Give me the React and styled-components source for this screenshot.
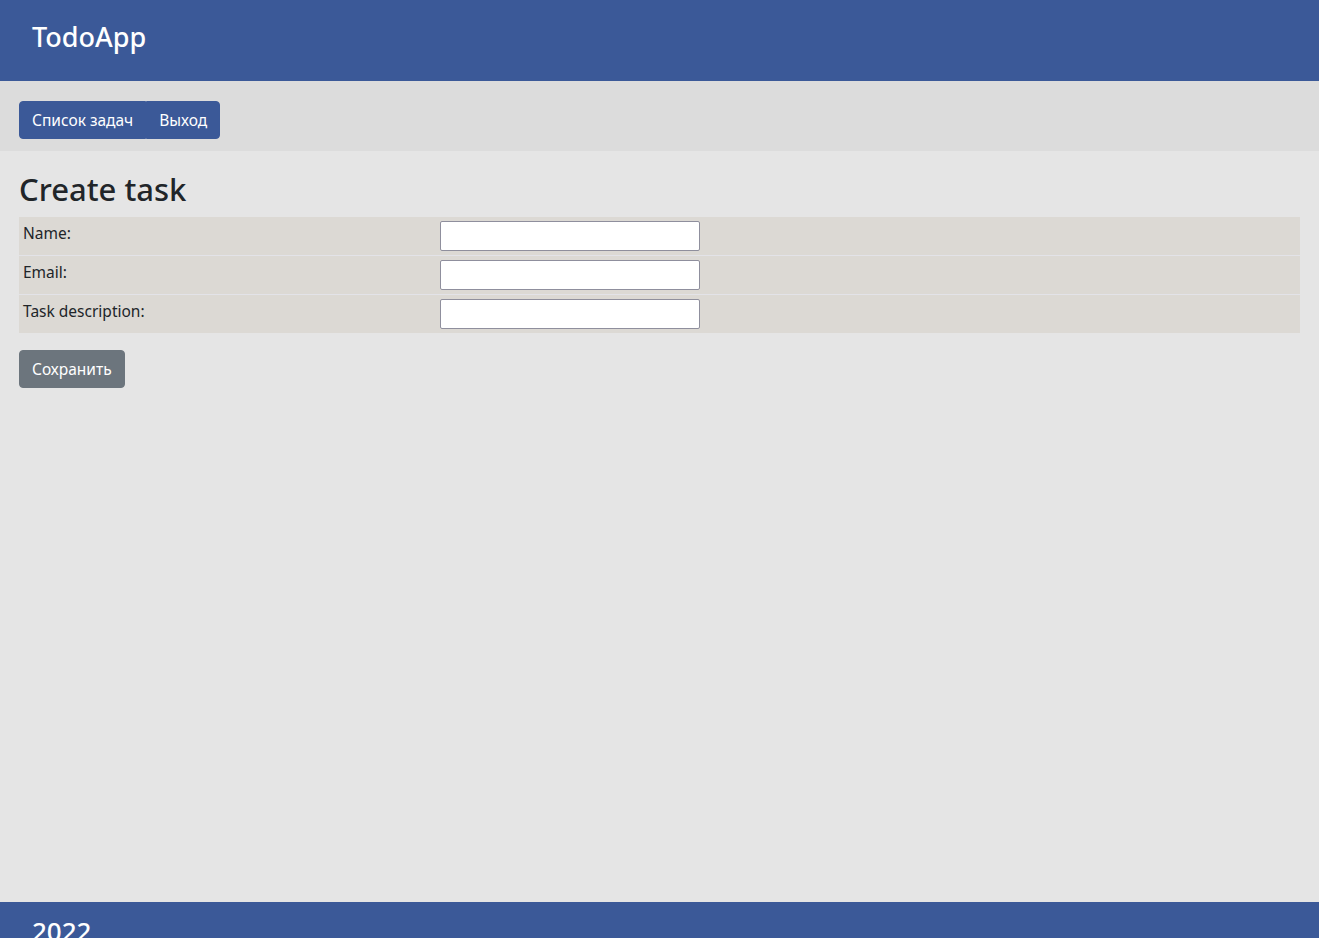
import React from 'react';
import styled, { createGlobalStyle } from 'styled-components';

const GlobalStyle = createGlobalStyle`
  body {
    margin: 0;
    font-family: "Noto Sans", "Open Sans", sans-serif;
    color: #212529;
    background: #e5e5e5;
  }
`;

const Header = styled.header`
  background: #3b5998;
  height: 81px;
  display: flex;
  align-items: center;
  padding: 0 32px;
  padding-bottom: 8px;
  box-sizing: border-box;
`;

const Brand = styled.div`
  color: #fff;
  font-size: 27px;
  font-weight: 500;
`;

const Nav = styled.nav`
  background: #dcdcdc;
  height: 70px;
  display: flex;
  align-items: flex-start;
  padding: 20px 19px 0;
  box-sizing: border-box;
`;

const BtnGroup = styled.div`
  display: flex;
`;

const Button = styled.button`
  font-family: inherit;
  font-size: 15.5px;
  line-height: 24px;
  padding: 6px 12px;
  border: 1px solid ${p => (p.$secondary ? '#6c757d' : '#3b5998')};
  background: ${p => (p.$secondary ? '#6c757d' : '#3b5998')};
  color: #fff;
  border-radius: 4px;
  cursor: pointer;
`;

const GroupButton = styled(Button)`
  &:first-child {
    border-top-right-radius: 0;
    border-bottom-right-radius: 0;
  }
  &:last-child {
    border-top-left-radius: 0;
    border-bottom-left-radius: 0;
  }
`;

const Main = styled.main`
  min-height: 751px;
  padding: 19px 19px;
  box-sizing: border-box;
`;

const Title = styled.h1`
  margin: 0 0 9px;
  font-size: 31px;
  font-weight: 500;
  line-height: 38px;
`;

const Table = styled.table`
  width: 100%;
  border-collapse: collapse;
  margin-bottom: 17px;
`;

const Row = styled.tr`
  background: #dcd9d4;
  border-bottom: 1px solid #e3e3e8;
  &:last-child {
    border-bottom: none;
  }
`;

const LabelCell = styled.td`
  width: 409px;
  padding: 4px;
  vertical-align: top;
  font-size: 15.5px;
  line-height: 24px;
`;

const InputCell = styled.td`
  padding: 4px;
`;

const Input = styled.input`
  width: 260px;
  height: 30px;
  box-sizing: border-box;
  border: 1px solid #8f8f9d;
  border-radius: 2px;
  background: #fff;
  font-family: inherit;
  font-size: 15px;
  display: block;
`;

const Footer = styled.footer`
  background: #3b5998;
  height: 60px;
  padding: 11px 32px;
  box-sizing: border-box;
  color: #fff;
  font-size: 26px;
  font-weight: 500;
`;

const fields = ['Name:', 'Email:', 'Task description:'];

export default function App() {
  return (
    <>
      <GlobalStyle />
      <Header>
        <Brand>TodoApp</Brand>
      </Header>
      <Nav>
        <BtnGroup>
          <GroupButton>Список задач</GroupButton>
          <GroupButton>Выход</GroupButton>
        </BtnGroup>
      </Nav>
      <Main>
        <Title>Create task</Title>
        <Table>
          <tbody>
            {fields.map(f => (
              <Row key={f}>
                <LabelCell>{f}</LabelCell>
                <InputCell>
                  <Input type="text" />
                </InputCell>
              </Row>
            ))}
          </tbody>
        </Table>
        <Button $secondary>Сохранить</Button>
      </Main>
      <Footer>2022</Footer>
    </>
  );
}
